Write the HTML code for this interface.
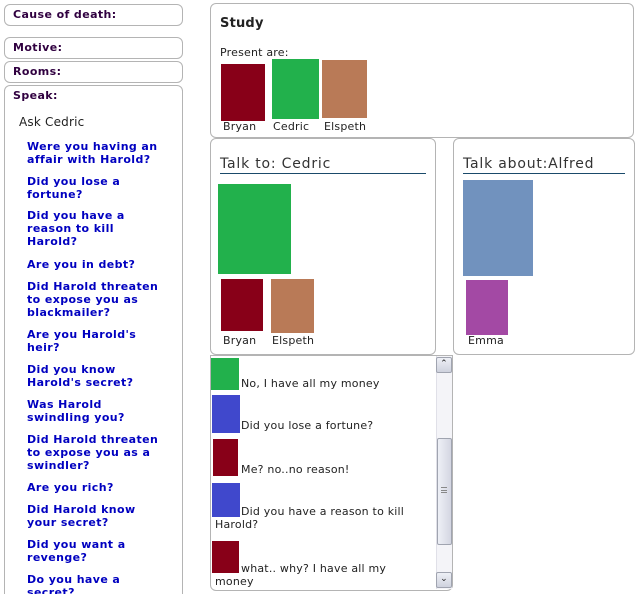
<!DOCTYPE html>
<html><head><meta charset="utf-8"><style>
*{margin:0;padding:0;box-sizing:border-box}
html,body{width:639px;height:594px;overflow:hidden}
body{background:#fff;font-family:"DejaVu Sans","Liberation Sans",sans-serif;font-size:11px;color:#222;position:relative;letter-spacing:0.2px}
.b{position:absolute;border:1px solid #b4b4b4;border-radius:6px;background:#fff}
.h{position:absolute;left:8px;font-weight:bold;color:#300040;font-size:11px;letter-spacing:0.4px}
.q{position:absolute;left:27px;font-weight:bold;color:#0000c0;font-size:11px;line-height:13px;white-space:nowrap;letter-spacing:0.4px}
.a{position:absolute}
.t{position:absolute;white-space:nowrap}
.hd{position:absolute;font-size:14px;font-weight:normal;color:#333;border-bottom:1px solid #1a4a6a;line-height:17px;letter-spacing:0.8px}
</style></head><body>
<div class="b" style="left:4px;top:4px;width:179px;height:22px"><div class="h" style="top:3px">Cause of death:</div></div>
<div class="b" style="left:4px;top:37px;width:179px;height:22px"><div class="h" style="top:3px">Motive:</div></div>
<div class="b" style="left:4px;top:61px;width:179px;height:22px"><div class="h" style="top:3px">Rooms:</div></div>
<div class="b" style="left:4px;top:85px;width:179px;height:520px"><div class="h" style="top:3px">Speak:</div></div>
<div class="t" style="left:19px;top:115px;font-size:12px;color:#222">Ask Cedric</div>
<div class="q" style="top:140px">Were you having an<br>affair with Harold?</div>
<div class="q" style="top:175px">Did you lose a<br>fortune?</div>
<div class="q" style="top:209px">Did you have a<br>reason to kill<br>Harold?</div>
<div class="q" style="top:258px">Are you in debt?</div>
<div class="q" style="top:280px">Did Harold threaten<br>to expose you as<br>blackmailer?</div>
<div class="q" style="top:328px">Are you Harold's<br>heir?</div>
<div class="q" style="top:363px">Did you know<br>Harold's secret?</div>
<div class="q" style="top:398px">Was Harold<br>swindling you?</div>
<div class="q" style="top:433px">Did Harold threaten<br>to expose you as a<br>swindler?</div>
<div class="q" style="top:481px">Are you rich?</div>
<div class="q" style="top:503px">Did Harold know<br>your secret?</div>
<div class="q" style="top:538px">Did you want a<br>revenge?</div>
<div class="q" style="top:573px">Do you have a<br>secret?</div>

<div class="b" style="left:210px;top:3px;width:424px;height:135px"></div>
<div class="t" style="left:220px;top:16px;font-size:13px;font-weight:bold;color:#222">Study</div>
<div class="t" style="left:220px;top:46px">Present are:</div>
<div class="a" style="left:221px;top:64px;width:44px;height:57px;background:#880018"></div>
<div class="a" style="left:272px;top:59px;width:47px;height:60px;background:#22b14c"></div>
<div class="a" style="left:322px;top:60px;width:45px;height:58px;background:#b97a57"></div>
<div class="t" style="left:223px;top:120px">Bryan</div>
<div class="t" style="left:273px;top:120px">Cedric</div>
<div class="t" style="left:324px;top:120px">Elspeth</div>

<div class="b" style="left:210px;top:138px;width:226px;height:217px"></div>
<div class="hd" style="left:220px;top:156px;width:206px">Talk to: Cedric</div>
<div class="a" style="left:218px;top:184px;width:73px;height:90px;background:#22b14c"></div>
<div class="a" style="left:221px;top:279px;width:42px;height:52px;background:#880018"></div>
<div class="a" style="left:271px;top:279px;width:43px;height:54px;background:#b97a57"></div>
<div class="t" style="left:223px;top:334px">Bryan</div>
<div class="t" style="left:272px;top:334px">Elspeth</div>

<div class="b" style="left:453px;top:138px;width:182px;height:217px"></div>
<div class="hd" style="left:463px;top:156px;width:162px">Talk about:Alfred</div>
<div class="a" style="left:463px;top:180px;width:70px;height:96px;background:#7192be"></div>
<div class="a" style="left:466px;top:280px;width:42px;height:55px;background:#a349a4"></div>
<div class="t" style="left:468px;top:334px">Emma</div>

<div class="b" style="left:210px;top:355px;width:243px;height:236px;border-radius:0 0 6px 6px;overflow:hidden"></div>
<div class="a" style="left:211px;top:358px;width:28px;height:32px;background:#22b14c"></div>
<div class="t" style="left:241px;top:377px">No, I have all my money</div>
<div class="a" style="left:212px;top:395px;width:28px;height:38px;background:#4048cc"></div>
<div class="t" style="left:241px;top:419px">Did you lose a fortune?</div>
<div class="a" style="left:213px;top:439px;width:25px;height:37px;background:#880018"></div>
<div class="t" style="left:241px;top:463px">Me? no..no reason!</div>
<div class="a" style="left:212px;top:483px;width:28px;height:34px;background:#4048cc"></div>
<div class="t" style="left:241px;top:505px">Did you have a reason to kill</div>
<div class="t" style="left:215px;top:518px">Harold?</div>
<div class="a" style="left:212px;top:541px;width:27px;height:32px;background:#880018"></div>
<div class="t" style="left:241px;top:562px">what.. why? I have all my</div>
<div class="t" style="left:215px;top:575px">money</div>

<div class="a" style="left:436px;top:356px;width:16px;height:233px;background:#f4f4f8;border-left:1px solid #e0e0e8"></div>
<div class="a" style="left:436px;top:357px;width:16px;height:16px;background:linear-gradient(#eef0f6,#cfd2de);border:1px solid #a0a4b0;border-radius:2px;font-size:9px;line-height:13px;text-align:center;color:#222">&#8963;</div>
<div class="a" style="left:437px;top:438px;width:15px;height:107px;background:linear-gradient(90deg,#eef0f6,#d4d6e2);border:1px solid #a0a4b0;border-radius:2px"></div>
<div class="a" style="left:441px;top:487px;width:6px;height:6px;border-top:1px solid #888;border-bottom:1px solid #888"></div>
<div class="a" style="left:441px;top:490px;width:6px;height:1px;background:#888"></div>
<div class="a" style="left:436px;top:572px;width:16px;height:16px;background:linear-gradient(#eef0f6,#cfd2de);border:1px solid #a0a4b0;border-radius:2px;font-size:9px;line-height:13px;text-align:center;color:#222">&#8964;</div>
</body></html>
